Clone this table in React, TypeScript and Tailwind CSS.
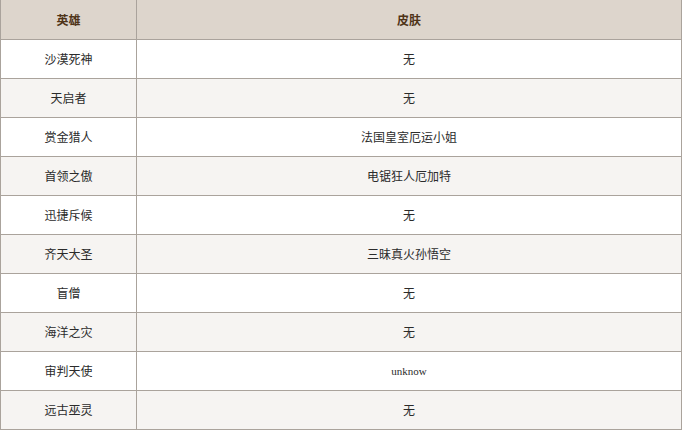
const rows: [string, string][] = [
  ['沙漠死神', '无'],
  ['天启者', '无'],
  ['赏金猎人', '法国皇室厄运小姐'],
  ['首领之傲', '电锯狂人厄加特'],
  ['迅捷斥候', '无'],
  ['齐天大圣', '三昧真火孙悟空'],
  ['盲僧', '无'],
  ['海洋之灾', '无'],
  ['审判天使', 'unknow'],
  ['远古巫灵', '无'],
];

export default function App() {
  return (
    <div className="min-h-screen bg-white font-['Noto_Sans_CJK_SC',sans-serif] text-[12px] text-[#2b2b2b]">
      <div className="w-[682px] border-x border-[#aaa39c]">
        <div className="flex h-[40px] border-b border-[#aaa39c] bg-[#ddd5cc] font-bold text-[#4f3418]">
          <div className="flex w-[136px] items-center justify-center border-r border-[#aaa39c]">英雄</div>
          <div className="flex flex-1 items-center justify-center">皮肤</div>
        </div>
        {rows.map(([hero, skin], i) => (
          <div
            key={hero}
            className={`flex h-[39px] border-b border-[#aaa39c] ${i % 2 === 0 ? 'bg-white' : 'bg-[#f6f4f2]'}`}
          >
            <div className="flex w-[136px] items-center justify-center border-r border-[#aaa39c]">{hero}</div>
            <div
              className={`flex flex-1 items-center justify-center ${
                skin === 'unknow' ? "font-['Liberation_Serif',serif] text-[11px]" : ''
              }`}
            >
              {skin}
            </div>
          </div>
        ))}
      </div>
    </div>
  );
}
